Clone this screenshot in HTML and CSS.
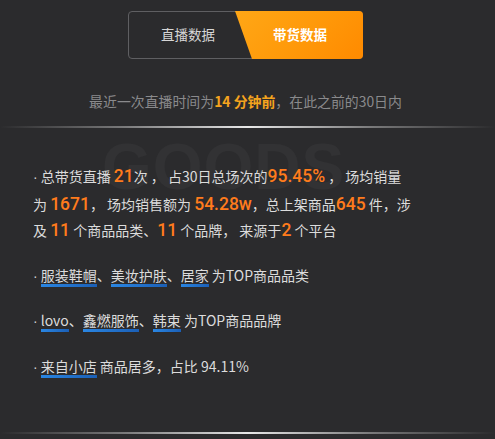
FILE: index.html
```html
<!DOCTYPE html>
<html lang="zh">
<head>
<meta charset="utf-8">
<title>带货数据</title>
<link rel="stylesheet" href="styles.css">
</head>
<body>
<div class="page">
  <div class="tabs">
    <div class="tab tab-live">直播数据</div>
    <div class="tab tab-goods">带货数据</div>
  </div>
  <p class="subtitle">最近一次直播时间为<b class="hl">14 分钟前</b>，在此之前的30日内</p>
  <div class="rule"></div>
  <div class="content">
    <div class="watermark">GOODS</div>
    <p class="item first"><span class="dot">·</span>总带货直播 <span class="num">21</span>次 ， 占30日总场次的<span class="num">95.45%</span> ， 场均销量<br>为 <span class="num">1671</span>， 场均销售额为 <span class="num">54.28w</span>，总上架商品<span class="num">645</span> 件，涉<br>及 <span class="num">11</span> 个商品品类、<span class="num">11</span> 个品牌， 来源于<span class="num">2</span> 个平台</p>
    <p class="item"><span class="dot">·</span><span class="tag">服装鞋帽</span>、<span class="tag">美妆护肤</span>、<span class="tag">居家</span> 为TOP商品品类</p>
    <p class="item"><span class="dot">·</span><span class="tag">lovo</span>、<span class="tag">鑫燃服饰</span>、<span class="tag">韩束</span> 为TOP商品品牌</p>
    <p class="item"><span class="dot">·</span><span class="tag">来自小店</span> 商品居多，占比 94.11%</p>
  </div>
  <div class="rule bottom"></div>
</div>
</body>
</html>
```
FILE: styles.css
```css
html, body {
  margin: 0;
  padding: 0;
  background: #2b2b2d;
}
body {
  font-family: "Noto Sans CJK SC", "Noto Sans", sans-serif;
  color: #dcdcdc;
  width: 495px;
  height: 439px;
  overflow: hidden;
}
.page {
  padding-top: 11px;
}
.tabs {
  width: 235px;
  height: 48px;
  margin: 0 0 0 128px;
  box-sizing: border-box;
  border: 1px solid #5f5f62;
  border-radius: 4px;
  display: flex;
  position: relative;
}
.tab {
  display: flex;
  align-items: center;
  justify-content: center;
  font-size: 13.5px;
  line-height: 1;
}
.tab-live {
  width: 118px;
  color: #d6d6d6;
}
.tab-goods {
  position: absolute;
  top: -1px;
  right: -1px;
  bottom: -1px;
  width: 128px;
  padding-left: 2px;
  box-sizing: border-box;
  color: #fff;
  font-weight: bold;
  border-radius: 0 4px 4px 0;
  background: linear-gradient(135deg, #ffa716 0%, #ff9a0a 50%, #ff8a00 100%);
  clip-path: polygon(0 0, 100% 0, 100% 100%, 17px 100%);
}
.subtitle {
  margin: 33px 0 0;
  text-align: center;
  font-size: 13.9px;
  line-height: 18px;
  color: #8a8a8c;
  padding-right: 4px;
}
.hl {
  color: #f5a41e;
  font-weight: bold;
}
.rule {
  height: 2px;
  margin-top: 16px;
  background: linear-gradient(90deg, rgba(255,255,255,0) 0%, rgba(200,200,200,0.5) 25%, #e8e8e8 50%, rgba(200,200,200,0.5) 75%, rgba(255,255,255,0) 100%);
}
.rule.bottom {
  margin-top: 51.5px;
}
.content {
  position: relative;
  padding: 35px 0 0 33px;
}
.watermark {
  position: absolute;
  left: 102px;
  top: 7px;
  font-family: "Liberation Sans", Arial, sans-serif;
  font-weight: bold;
  font-size: 64px;
  letter-spacing: 1px;
  color: rgba(255, 255, 255, 0.035);
  line-height: 1;
  pointer-events: none;
}
.item {
  position: relative;
  margin: 0 0 18px;
  font-size: 14px;
  line-height: 26.5px;
  color: #dcdcdc;
}
.dot {
  font-family: "Liberation Sans", Arial, sans-serif;
  color: #cfcfcf;
  margin-right: 3px;
}
.num {
  font-family: Roboto, "Noto Sans", sans-serif;
  font-weight: 500;
  font-size: 17.5px;
  line-height: 1;
  color: #ff7b1c;
}
.tag {
  padding-bottom: 2px;
  background: linear-gradient(90deg, #2a86e2, #1b5fb6) left bottom / 100% 3px no-repeat;
}
```
